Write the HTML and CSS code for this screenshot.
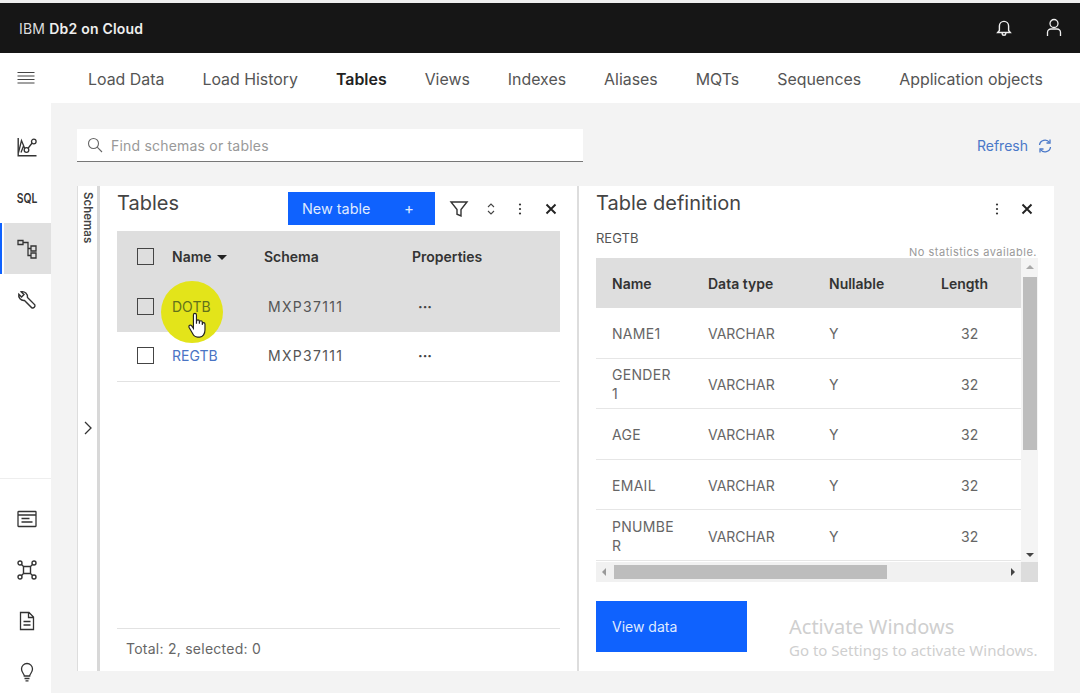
FILE: index.html
```html
<!DOCTYPE html>
<html lang="en">
<head>
<meta charset="utf-8">
<title>IBM Db2 on Cloud</title>
<link rel="stylesheet" href="styles.css">
</head>
<body>
<div class="topstrip"></div>
<header class="topbar">
  <div class="brand">IBM <b>Db2 on Cloud</b></div>
  <div class="top-icons">
    <svg class="ic20" viewBox="0 0 20 20"><path d="M3.700 14.500 5.400 12.500V8a4.600 4.600 0 0 1 9.200 0v4.500l1.700 2Z M8.200 14.800v.6a1.800 1.800 0 0 0 3.600 0v-.6" fill="none" stroke="#eee" stroke-width="1.400"/></svg>
    <svg class="ic20" viewBox="0 0 20 20"><circle cx="10" cy="5.500" r="4" fill="none" stroke="#eee" stroke-width="1.300"/><path d="M3.500 18v-3.500a3.500 3.500 0 0 1 3.500-3.500h6a3.500 3.500 0 0 1 3.500 3.500V18" fill="none" stroke="#eee" stroke-width="1.300"/></svg>
  </div>
</header>
<div class="shell">
  <aside class="rail">
    <div class="rail-menu">
      <svg class="ic20" viewBox="0 0 20 20"><path d="M1.500 4.500h17M1.500 8h17M1.500 11.500h17M1.500 15h17" stroke="#444" stroke-width="1.200"/></svg>
    </div>
    <div class="rail-top">
      <div class="rail-item">
        <svg class="ic20" viewBox="0 0 20 20"><path d="M1.200 1v17.800h18.300" fill="none" stroke="#333" stroke-width="1.400"/><path d="M1.500 15.500 4.500 3.500 9 14.500M4 15.500 6.500 9M10.500 12l5-6.500" fill="none" stroke="#333" stroke-width="1.300"/><circle cx="9.500" cy="13" r="2.300" fill="#fff" stroke="#333" stroke-width="1.300"/><circle cx="16.800" cy="4.500" r="2.300" fill="#fff" stroke="#333" stroke-width="1.300"/></svg>
      </div>
      <div class="rail-item sql">SQL</div>
      <div class="rail-item active">
        <svg class="ic20" viewBox="0 0 20 20"><path d="M1 1.500h5v4H1z M14 7h5v5h-5z M14 14h5v5h-5z M6 3.500h5v13h3 M11 9.500h3" fill="none" stroke="#333" stroke-width="1.300"/></svg>
      </div>
      <div class="rail-item">
        <svg class="ic20" viewBox="0 0 20 20"><path d="M1.800 4.200 4.600 7 7 4.600 4.200 1.800A5.200 5.200 0 0 1 10.500 7.500L17.800 14.800A2.300 2.300 0 0 1 14.800 17.800L7.500 10.500A5.200 5.200 0 0 1 1.800 4.200Z" fill="none" stroke="#333" stroke-width="1.400"/></svg>
      </div>
    </div>
    <div class="rail-bottom">
      <div class="rail-item">
        <svg class="ic20" viewBox="0 0 20 20"><path d="M1.500 2.500h17a.5.5 0 0 1 .5.5v14a.5.5 0 0 1-.5.5h-17a.5.5 0 0 1-.5-.5V3a.5.5 0 0 1 .5-.5Z M1 6h18 M4.500 9.500h8M4.500 13h11" fill="none" stroke="#333" stroke-width="1.300"/></svg>
      </div>
      <div class="rail-item">
        <svg class="ic20" viewBox="0 0 20 20"><path d="M6.500 6.500h7v7h-7z M4 4l3 3M16 4l-3 3M4 16l3-3M16 16l-3-3" fill="none" stroke="#333" stroke-width="1.400"/><circle cx="3" cy="3" r="2" fill="#fff" stroke="#333" stroke-width="1.400"/><circle cx="17" cy="3" r="2" fill="#fff" stroke="#333" stroke-width="1.400"/><circle cx="3" cy="17" r="2" fill="#fff" stroke="#333" stroke-width="1.400"/><circle cx="17" cy="17" r="2" fill="#fff" stroke="#333" stroke-width="1.400"/></svg>
      </div>
      <div class="rail-item">
        <svg class="ic20" viewBox="0 0 20 20"><path d="M3.500 1.500h8.500l4.500 4.500v12.500h-13Z M11.500 1.500v5h5 M6.500 10.500h7M6.500 14h7" fill="none" stroke="#333" stroke-width="1.300"/></svg>
      </div>
      <div class="rail-item">
        <svg class="ic20" viewBox="0 0 20 20"><path d="M7.300 14c0-2-2.800-3.500-2.800-7a5.500 5.500 0 0 1 11 0c0 3.500-2.800 5-2.800 7Z M7.500 16.500h5M8.500 18.800h3" fill="none" stroke="#333" stroke-width="1.300"/></svg>
      </div>
    </div>
  </aside>
  <div class="main">
    <nav class="tabs">
      <span class="tab">Load Data</span>
      <span class="tab">Load History</span>
      <span class="tab current">Tables</span>
      <span class="tab">Views</span>
      <span class="tab">Indexes</span>
      <span class="tab">Aliases</span>
      <span class="tab">MQTs</span>
      <span class="tab">Sequences</span>
      <span class="tab">Application objects</span>
    </nav>
    <div class="content">
      <div class="searchrow">
        <div class="search">
          <svg class="ic16" viewBox="0 0 16 16"><circle cx="6.500" cy="6.500" r="5" fill="none" stroke="#666" stroke-width="1.100"/><path d="m10.200 10.200 4.800 4.800" stroke="#666" stroke-width="1.100"/></svg>
          <span>Find schemas or tables</span>
        </div>
        <div class="refresh">
          <span>Refresh</span>
          <svg class="ic16" viewBox="0 0 16 16"><path d="M2.500 7a5.500 5.500 0 0 1 10-2.500M13.500 9a5.500 5.500 0 0 1-10 2.500" fill="none" stroke="#4a78c8" stroke-width="1.300"/><path d="M13 1.500v3.500H9.500M3 14.500V11h3.500" fill="none" stroke="#4a78c8" stroke-width="1.300"/></svg>
        </div>
      </div>
      <div class="panels">
        <div class="schemas">
          <span class="schemas-label">Schemas</span>
          <svg class="chev" viewBox="0 0 10 16"><path d="m2 2 6 6-6 6" fill="none" stroke="#333" stroke-width="1.300"/></svg>
        </div>
        <section class="tables-panel">
          <div class="panel-head">
            <h2>Tables</h2>
            <div class="head-tools">
              <button class="btn-new"><span>New table</span><span class="plus">+</span></button>
              <svg class="ic20" viewBox="0 0 20 20"><path d="M2 3h16l-6 7.500V17l-4-1.800v-4.700Z" fill="none" stroke="#333" stroke-width="1.400"/></svg>
              <svg class="tool-sort" viewBox="0 0 10 16"><path d="m2 6 3-3 3 3M2 10l3 3 3-3" fill="none" stroke="#444" stroke-width="1.100"/></svg>
              <svg class="tool-dots" viewBox="0 0 4 14"><circle cx="2" cy="2.500" r="1.100" fill="#333"/><circle cx="2" cy="7" r="1.100" fill="#333"/><circle cx="2" cy="11.500" r="1.100" fill="#333"/></svg>
              <svg class="tool-x" viewBox="0 0 12 12"><path d="m1.500 1.500 9 9M10.500 1.500l-9 9" stroke="#222" stroke-width="1.900"/></svg>
            </div>
          </div>
          <div class="tgrid thead">
            <span class="cb"></span>
            <span class="th name-th">Name <i class="caret"></i></span>
            <span class="th">Schema</span>
            <span class="th">Properties</span>
          </div>
          <div class="tgrid trow hover">
            <span class="cb"></span>
            <span class="link dotb">DOTB<i class="spot"></i>
              <svg class="hand" viewBox="0 0 18 24"><path d="M5.500 2.500a1.300 1.300 0 0 1 2.600 0V10l.1-2a1.200 1.200 0 0 1 2.400 0v2l.1-1.300a1.200 1.200 0 0 1 2.400 0V11l.1-.8a1.100 1.100 0 0 1 2.200 0v5.300c0 3-1.700 6-4.500 6H9c-2 0-3.200-1-4.200-3L1.700 13a1.300 1.300 0 0 1 2.200-1.300l1.600 2.300Z" fill="#fff" stroke="#222" stroke-width="1"/></svg>
            </span>
            <span class="cell">MXP37111</span>
            <span class="cell dots">···</span>
          </div>
          <div class="tgrid trow">
            <span class="cb"></span>
            <span class="link">REGTB</span>
            <span class="cell">MXP37111</span>
            <span class="cell dots">···</span>
          </div>
          <div class="tfoot">Total: 2, selected: 0</div>
        </section>
        <section class="def-panel">
          <div class="def-head">
            <h2>Table definition</h2>
            <div class="def-tools">
              <svg class="tool-dots" viewBox="0 0 4 14"><circle cx="2" cy="2.500" r="1.100" fill="#333"/><circle cx="2" cy="7" r="1.100" fill="#333"/><circle cx="2" cy="11.500" r="1.100" fill="#333"/></svg>
              <svg class="tool-x" viewBox="0 0 12 12"><path d="m1.500 1.500 9 9M10.500 1.500l-9 9" stroke="#222" stroke-width="1.900"/></svg>
            </div>
          </div>
          <div class="def-sub">REGTB</div>
          <div class="nostats">No statistics available.</div>
          <div class="scrollbox">
            <div class="dtable">
              <div class="dgrid dhead"><span>Name</span><span>Data type</span><span>Nullable</span><span class="len">Length</span></div>
              <div class="dgrid drow"><span>NAME1</span><span>VARCHAR</span><span>Y</span><span class="num">32</span></div>
              <div class="dgrid drow"><span>GENDER 1</span><span>VARCHAR</span><span>Y</span><span class="num">32</span></div>
              <div class="dgrid drow"><span>AGE</span><span>VARCHAR</span><span>Y</span><span class="num">32</span></div>
              <div class="dgrid drow"><span>EMAIL</span><span>VARCHAR</span><span>Y</span><span class="num">32</span></div>
              <div class="dgrid drow"><span>PNUMBER</span><span>VARCHAR</span><span>Y</span><span class="num">32</span></div>
            </div>
            <div class="vbar">
              <i class="arr up"></i>
              <div class="vtrack"><div class="vthumb"></div></div>
              <i class="arr down"></i>
            </div>
            <div class="hbar">
              <i class="arr left"></i>
              <div class="htrack"><div class="hthumb"></div></div>
              <i class="arr right"></i>
            </div>
            <div class="corner"></div>
          </div>
          <div class="def-foot">
            <button class="btn-view">View data</button>
            <div class="activate">
              <div class="a1">Activate Windows</div>
              <div class="a2">Go to Settings to activate Windows.</div>
            </div>
          </div>
        </section>
      </div>
    </div>
  </div>
</div>
</body>
</html>
```

FILE: styles.css
```css
* { box-sizing: border-box; }
html, body { margin: 0; padding: 0; }
body {
  width: 1080px; height: 693px; overflow: hidden;
  font-family: "Inter", "Noto Sans", "Liberation Sans", sans-serif;
  font-size: 14px; color: #444; background: #f3f3f3;
  display: flex; flex-direction: column;
}
svg { display: block; flex: none; }
.ic20 { width: 20px; height: 20px; }
.ic16 { width: 16px; height: 16px; }
.topstrip { height: 3px; background: #eee; flex: none; }
.topbar {
  height: 50px; flex: none; background: #161616; color: #ddd;
  display: flex; align-items: center; justify-content: space-between;
  padding: 0 16px 0 19px; font-size: 14px; letter-spacing: .2px;
}
.brand b { font-weight: 600; color: #eee; }
.top-icons { display: flex; gap: 30px; }
.shell { flex: 1; display: flex; min-height: 0; }
.rail {
  width: 51px; flex: none; background: #fff;
  display: flex; flex-direction: column;
}
.rail-menu { height: 50px; display: flex; align-items: center; padding-left: 16px; }
.rail-top { margin-top: 18px; flex: 1; }
.rail-item { height: 51px; display: flex; align-items: center; justify-content: center; padding-left: 3px; }
.rail-item.sql { font-size: 13px; font-weight: 600; color: #333; transform: scaleX(.8); padding-left: 4px; }
.rail-item.active { background: #e0e0e0; box-shadow: inset 2px 0 0 #0f62fe, inset 4px 0 0 #fff; }
.rail-bottom { border-top: 1px solid #eee; padding-top: 14px; margin-bottom: -4px; }
.main { flex: 1; min-width: 0; display: flex; flex-direction: column; }
.tabs {
  height: 50px; flex: none; background: #fff;
  display: flex; align-items: center; gap: 38px; padding: 2px 0 0 37px;
  font-size: 15.900px; color: #555;
}
.tab.current { font-weight: 600; color: #222; }
.content { flex: 1; min-height: 0; padding: 26px 26px 22px 26px; display: flex; flex-direction: column; }
.searchrow { display: flex; align-items: center; justify-content: space-between; height: 33px; flex: none; }
.search {
  width: 506px; height: 33px; background: #fff; border-bottom: 1px solid #777;
  display: flex; align-items: center; gap: 8px; padding-left: 10px;
  color: #999; font-size: 14px; letter-spacing: .2px;
}
.refresh { display: flex; align-items: center; gap: 9px; color: #4a78c8; font-size: 14px; padding-right: 1px; }
.panels { flex: 1; display: flex; min-height: 0; margin-top: 24px; background: #fff; }
.schemas {
  width: 23px; flex: none; position: relative;
  background: #fff; border-left: 1px solid #ddd; border-right: 3px solid #d8d8d8;
}
.schemas-label {
  position: absolute; top: 6px; left: 3px;
  writing-mode: vertical-rl; font-size: 11.500px; font-weight: 600; color: #444; line-height: 13px;
}
.chev { position: absolute; top: 234px; left: 5px; width: 10px; height: 16px; }
.tables-panel {
  width: 479px; flex: none; padding: 0 17px 0 17px;
  display: flex; flex-direction: column; border-right: 2px solid #ddd;
}
.panel-head { height: 45px; display: flex; justify-content: space-between; flex: none; }
h2 { margin: 0; font-size: 20px; font-weight: 400; color: #444; padding-top: 3px; line-height: 28px; }
.head-tools { display: flex; align-items: center; height: 45px; }
.btn-new {
  width: 147px; height: 33px; border: 0; background: #0f62fe; color: #dfe9ff;
  font: inherit; font-size: 14.400px; display: flex; align-items: center; justify-content: space-between;
  padding: 0 21px 0 14px; margin-right: 14px;
}
.plus { font-size: 15px; }
.tool-sort { width: 10px; height: 16px; margin-left: 17px; }
.tool-dots { width: 4px; height: 14px; margin-left: 22px; }
.tool-x { width: 12px; height: 12px; margin-left: 23px; margin-right: 3px; }
.tgrid { display: grid; grid-template-columns: 35px 92px 148px 1fr; align-items: center; padding-left: 20px; }
.cb { width: 17px; height: 17px; border: 1.500px solid #444; background: transparent; display: block; }
.thead { height: 51px; background: #dedede; flex: none; }
.th { font-weight: 600; color: #333; font-size: 14px; }
.caret {
  display: inline-block; width: 0; height: 0; margin-left: 2px; vertical-align: 2px;
  border-left: 5.500px solid transparent; border-right: 5.500px solid transparent; border-top: 5px solid #222;
}
.trow { height: 50px; flex: none; border-bottom: 1px solid #e2e2e2; padding-bottom: 2px; }
.trow.hover { background: #dedede; border-bottom: 0; }
.link { color: #4a74c4; position: relative; display: block; font-size: 14px; }
.dotb { color: #62721a; isolation: isolate; }
.spot {
  position: absolute; left: -11px; top: -17px; width: 62px; height: 62px;
  border-radius: 50%; background: #e3e41a; z-index: -1;
}
.hand { position: absolute; left: 15px; top: 14px; width: 21px; height: 28px; }
.cell { color: #555; font-size: 14px; padding-left: 4px; letter-spacing: 1.300px; }
.dots { color: #444; font-weight: 700; padding-left: 6px; letter-spacing: 0; }
.tfoot {
  margin-top: auto; height: 43px; border-top: 1px solid #e2e2e2; flex: none;
  display: flex; align-items: center; padding: 0 0 4px 9px; color: #666; font-size: 14px; letter-spacing: .25px;
}
.def-panel { flex: 1; min-width: 0; padding: 0 17px 0 17px; display: flex; flex-direction: column; position: relative; }
.def-head { display: flex; justify-content: space-between; height: 38px; flex: none; }
.def-tools { display: flex; align-items: center; height: 45px; }
.def-tools .tool-dots { margin-left: 0; }
.def-tools .tool-x { margin-left: 22px; margin-right: 4px; }
.def-sub { font-size: 13px; color: #555; height: 20px; margin-top: 6px; flex: none; }
.nostats {
  position: absolute; right: 17px; top: 59px; font-size: 11px; color: #999; letter-spacing: .5px;
}
.scrollbox {
  margin-top: 8px; flex: none; width: 442px; height: 324px;
  display: grid; grid-template-columns: 425px 17px; grid-template-rows: 304px 20px;
  overflow: hidden;
}
.dtable { overflow: hidden; }
.dgrid { display: grid; grid-template-columns: 96px 121px 112px 1fr; align-items: center; padding-left: 16px; }
.dhead { height: 50px; background: #dedede; font-weight: 600; color: #333; font-size: 14px; }
.drow { height: 50.600px; border-bottom: 1px solid #e6e6e6; color: #666; font-size: 14px; line-height: 19px; padding-top: 2px; }
.drow span:first-child { padding-right: 28px; word-break: break-all; letter-spacing: .3px; }
.num { padding-left: 20px; }
.vbar { background: #f4f4f4; display: flex; flex-direction: column; align-items: center; }
.vtrack { flex: 1; width: 100%; }
.vthumb { width: 14px; height: 173px; background: #bdbdbd; margin: 8px auto 0; }
.hbar { background: #f1f1f1; display: flex; align-items: center; }
.htrack { flex: 1; }
.hthumb { width: 273px; height: 14px; background: #bdbdbd; }
.corner { background: #dcdcdc; }
.arr { width: 0; height: 0; display: block; flex: none; border: 4px solid transparent; }
.arr.up { border-bottom-color: #aaa; border-top-width: 0; margin-top: 7px; }
.arr.down { border-top-color: #444; border-bottom-width: 0; margin-bottom: 5px; }
.arr.left { border-right-color: #999; border-left-width: 0; margin: 0 8px 0 6px; }
.arr.right { border-left-color: #444; border-right-width: 0; margin: 0 6px; }
.def-foot { display: flex; margin-top: 19px; flex: none; }
.btn-view {
  width: 151px; height: 51px; border: 0; background: #0f62fe; color: #dfe9ff;
  font: inherit; font-size: 14px; text-align: left; padding-left: 16px; flex: none;
}
.activate { margin-left: 42px; color: #cfcfcf; margin-top: 13px; white-space: nowrap; }
.a1 { font-family: "Noto Sans", sans-serif; font-size: 20px; line-height: 26px; }
.a2 { font-family: "Noto Sans", sans-serif; font-size: 15px; line-height: 20px; }
```
